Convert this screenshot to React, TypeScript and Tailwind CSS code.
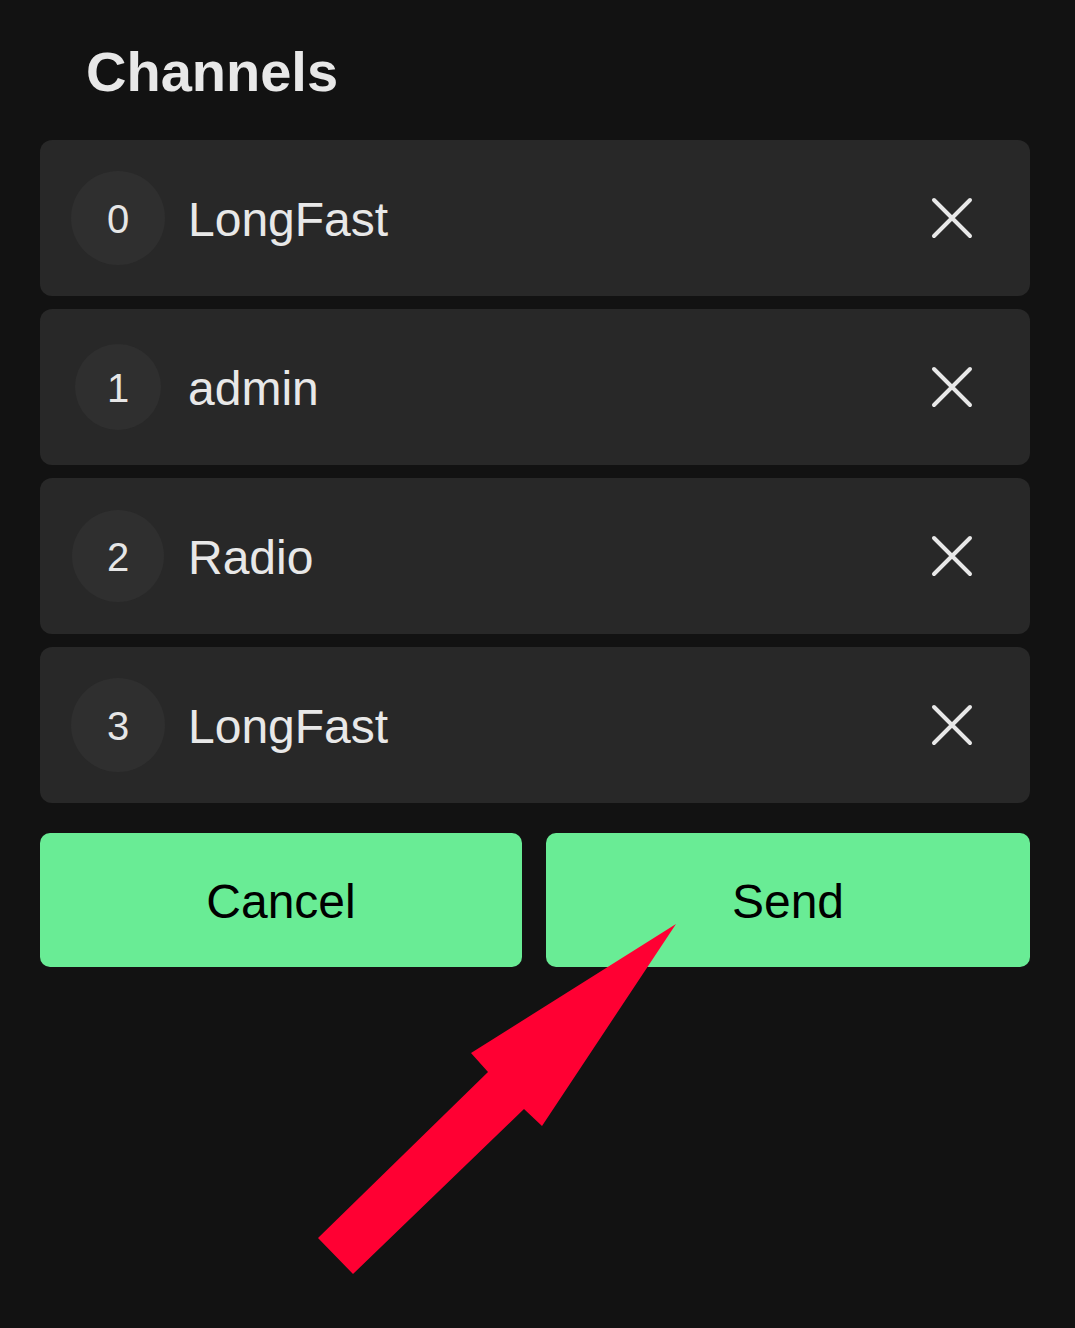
const channels = [
  { index: 0, name: "LongFast", size: 94 },
  { index: 1, name: "admin", size: 86 },
  { index: 2, name: "Radio", size: 92 },
  { index: 3, name: "LongFast", size: 94 },
];

function CloseIcon() {
  return (
    <svg width="42" height="42" viewBox="0 0 42 42" fill="none" stroke="#e8e8e8" strokeWidth="4" strokeLinecap="round">
      <path d="M3 3 L39 39 M39 3 L3 39" />
    </svg>
  );
}

function ChannelRow(props: { index: number; name: string; size: number }) {
  const { index, name, size } = props;
  return (
    <div className="flex h-[156px] items-center rounded-xl bg-[#282828] pr-[57px]">
      <div className="flex w-[148px] shrink-0 justify-center pl-[8px]">
        <div
          className="flex items-center justify-center rounded-full bg-[#2f2f2f] pt-[2px] text-[40px] leading-none text-[#e6e6e6]"
          style={{ width: size, height: size }}
        >
          {index}
        </div>
      </div>
      <div className="flex-1 pt-[3px] text-[48px] leading-none text-[#e8e8e8]">{name}</div>
      <CloseIcon />
    </div>
  );
}

export default function App() {
  return (
    <div className="relative h-[1328px] w-[1075px] overflow-hidden bg-[#121212] font-['Liberation_Sans',Arial,sans-serif]">
      <h1 className="h-[100px] pl-[86px] pt-[44px] text-[56px] font-bold leading-none text-[#e8e8e8]">Channels</h1>

      <div className="ml-10 mt-[40px] flex w-[990px] flex-col gap-[13px]">
        {channels.map((c) => (
          <ChannelRow key={c.index} index={c.index} name={c.name} size={c.size} />
        ))}
      </div>

      <div className="ml-10 mt-[30px] flex w-[990px] gap-[24px]">
        <button className="flex h-[134px] w-[482px] items-center justify-center rounded-[10px] bg-[#69ec95] pt-[4px] text-[48px] text-black">
          Cancel
        </button>
        <button className="flex h-[134px] flex-1 items-center justify-center rounded-[10px] bg-[#69ec95] pt-[4px] text-[48px] text-black">
          Send
        </button>
      </div>

      {/* red annotation arrow */}
      <svg className="pointer-events-none absolute left-0 top-0" width="1075" height="1328" viewBox="0 0 1075 1328">
        <polygon
          points="676,924 542,1126 524,1109 353,1274 318,1238 488,1072 471,1053"
          fill="#ff0033"
        />
      </svg>
    </div>
  );
}
